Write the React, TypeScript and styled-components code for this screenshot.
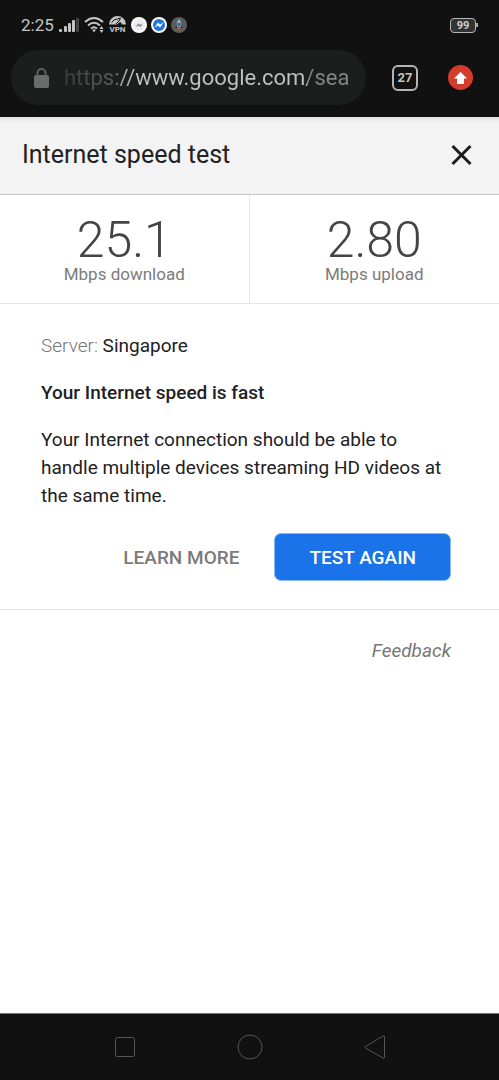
import React from "react";
import styled, { createGlobalStyle } from "styled-components";

const GlobalStyle = createGlobalStyle`
  * { box-sizing: border-box; }
  body {
    margin: 0;
    background: #fff;
    font-family: Roboto, "Liberation Sans", sans-serif;
    color: #212124;
  }
  button, input { font-family: inherit; }
`;

const Screen = styled.div`
  display: flex;
  flex-direction: column;
  min-height: 100vh;
`;

const BrowserChrome = styled.header`
  background: #111;
  padding-bottom: 12px;
`;

const StatusBar = styled.div`
  display: flex;
  align-items: center;
  height: 50px;
  padding: 0 21px;
`;

const Clock = styled.time`
  width: 38px;
  font-size: 17px;
  line-height: 20px;
  color: #c4c4c4;
`;

const StatusIcons = styled.div`
  display: flex;
  flex: 1;
  align-items: center;
  gap: 4px;
  svg { display: block; }
`;

const Battery = styled.div`
  display: flex;
  align-items: center;
`;

const BatteryBody = styled.div`
  width: 26px;
  height: 15px;
  border: 1px solid #b5b5b5;
  border-radius: 4px;
  background: #333;
  color: #d0d0d0;
  font-size: 11px;
  font-weight: 700;
  line-height: 13px;
  text-align: center;
`;

const BatteryTip = styled.div`
  width: 2px;
  height: 4px;
  background: #a5a5a5;
`;

const Toolbar = styled.div`
  display: flex;
  align-items: center;
  padding: 0 26px 0 11px;
`;

const AddressBar = styled.label`
  display: flex;
  flex: 1;
  align-items: center;
  min-width: 0;
  height: 55px;
  padding: 0 12px 0 22px;
  gap: 14px;
  border-radius: 28px;
  background: #1c1d1d;
  svg { flex: none; }
`;

const AddressInput = styled.input`
  flex: 1;
  min-width: 0;
  height: 32px;
  padding: 0;
  border: 0;
  outline: 0;
  font-size: 22px;
  color: transparent;
  background: linear-gradient(
    90deg,
    #3c3c3c 0,
    #5c5c5c 52px,
    #a0a0a0 56px,
    #c2c2c2 72px,
    #c2c2c2 242px,
    #858585 244px
  );
  background-clip: text;
  -webkit-background-clip: text;
`;

const IconButton = styled.button`
  display: flex;
  flex: none;
  align-items: center;
  justify-content: center;
  padding: 0;
  border: 0;
  background: none;
  cursor: pointer;
`;

const TabsButton = styled(IconButton)`
  width: 26px;
  height: 26px;
  margin: 0 30px 0 26px;
  border: 2px solid #b5b5b5;
  border-radius: 6px;
  color: #c4c4c4;
  font-size: 13px;
  font-weight: 700;
`;

const UpdateButton = styled(IconButton)`
  width: 25px;
  height: 25px;
  border-radius: 50%;
  background: #d43c2e;
`;

const TitleBar = styled.div`
  display: flex;
  align-items: center;
  justify-content: space-between;
  height: 78px;
  padding: 0 24px 2px 22px;
  background: linear-gradient(#e4e4e4, #f3f3f3 6px);
  border-bottom: 1px solid #c6c6c6;
`;

const Title = styled.h1`
  margin: 0;
  font-size: 25px;
  font-weight: 400;
  line-height: 32px;
`;

const Results = styled.section`
  display: grid;
  grid-template-columns: 1fr 1fr;
  border-bottom: 1px solid #e6e6e6;
`;

const Result = styled.div`
  display: flex;
  flex-direction: column;
  align-items: center;
  padding: 20px 0;
  &:first-child { border-right: 1px solid #e6e6e6; }
`;

const Speed = styled.div`
  font-size: 50px;
  font-weight: 300;
  line-height: 50px;
  color: #444;
`;

const Unit = styled.div`
  font-size: 17px;
  line-height: 18px;
  color: #7b7b7b;
`;

const Details = styled.section`
  padding: 28px 48px 28px 41px;
  border-bottom: 1px solid #e6e6e6;
  font-size: 19px;
  line-height: 28px;
`;

const Paragraph = styled.p`
  margin: 0 0 19px;
`;

const Muted = styled.span`
  font-weight: 300;
  color: #777;
`;

const Verdict = styled.h2`
  margin: 0 0 19px;
  font-size: 19px;
  font-weight: 500;
  line-height: 28px;
`;

const Actions = styled.div`
  display: flex;
  justify-content: flex-end;
  padding-top: 4px;
`;

const Button = styled.button<{ $primary?: boolean }>`
  height: 48px;
  padding: 0 34px;
  border: 1px solid ${(p) => (p.$primary ? "#8bb8f5" : "transparent")};
  border-radius: 7px;
  background: ${(p) => (p.$primary ? "#1a73e8" : "transparent")};
  color: ${(p) => (p.$primary ? "#fff" : "#7b7b7b")};
  font-size: 19px;
  font-weight: 500;
  white-space: nowrap;
  cursor: pointer;
`;

const Footer = styled.footer`
  display: flex;
  flex: 1;
  align-items: flex-start;
  justify-content: flex-end;
  padding: 27px 48px;
`;

const FeedbackLink = styled.a`
  font-size: 19px;
  font-style: italic;
  line-height: 28px;
  color: #777;
  text-decoration: none;
`;

const SystemNav = styled.nav`
  display: flex;
  justify-content: center;
  gap: 95px;
  height: 67px;
  border-top: 1px solid #777;
  background: #111;
`;

const NavButton = styled(IconButton)`
  width: 30px;
`;

const SignalIcon = () => (
  <svg width="21" height="16" viewBox="0 0 21 16" fill="#c4c4c4" aria-label="Signal">
    <rect x="0" y="12" width="3" height="3" rx="1" />
    <rect x="5" y="9" width="3" height="6" rx="1" />
    <rect x="9" y="6" width="3" height="9" rx="1" />
    <rect x="13" y="3" width="3" height="12" rx="1" />
    <rect x="17" y="1" width="3" height="14" rx="1" fill="#444" />
  </svg>
);

const WifiIcon = () => (
  <svg width="20" height="18" viewBox="0 0 20 18" fill="none" stroke="#c4c4c4" strokeWidth="2" aria-label="Wi-Fi">
    <path d="M1 6 Q10 -2 19 6" />
    <path d="M4 9.500 Q10 4 16 9.500" />
    <path d="M7 12.500 Q10 10 13 12.500" />
    <path d="M8 13.500h4l-2 3z" fill="#c4c4c4" stroke="none" />
    <path d="M17.500 10l2 3h-4zM17.500 17l2-3h-4z" fill="#c4c4c4" stroke="none" />
  </svg>
);

const VpnIcon = () => (
  <svg width="19" height="20" viewBox="0 0 19 20" aria-label="VPN">
    <path d="M1 9.500A8.500 8.500 0 0 1 18 9.500h-4a4 4 0 0 0-2-2.500l-3 2.500z" fill="#c4c4c4" />
    <path d="M3.500 7.500q3-4 6-3.500l3-1-1.500 3-3 3" fill="none" stroke="#111" />
    <text x="9.500" y="17" textAnchor="middle" fontFamily="Roboto, sans-serif" fontSize="8" fontWeight="700" fill="#c4c4c4">VPN</text>
  </svg>
);

const MessengerIcon = ({ blue = false }: { blue?: boolean }) => (
  <svg width="16" height="16" viewBox="0 0 16 16" aria-label="Messenger">
    <circle cx="8" cy="8" r="8" fill="#fff" />
    <circle cx="8" cy="8" r="6" fill={blue ? "#1f75dc" : "#ececec"} />
    <path
      d={blue ? "M3.500 10.500l3.500-5 2 2 3.500-2-3.500 5-2-2z" : "M5 10l2-3.500 2 1.500 2.500-1.500L9.500 10l-2-1.500z"}
      fill={blue ? "#fff" : "#5f7ea8"}
    />
  </svg>
);

const RocketIcon = () => (
  <svg width="16" height="16" viewBox="0 0 16 16" aria-label="Booster">
    <circle cx="8" cy="8" r="8" fill="#5b5d5d" />
    <path d="M8 2c2.500 2 2.500 5 2 8H6C5.500 7 5.500 4 8 2z" fill="#a9adb0" />
    <path d="M6 8l-2 3 2-.5zM10 8l2 3-2-.5z" fill="#222" />
    <circle cx="8" cy="7.500" r="2" fill="#2f6fb8" />
    <path d="M6.500 11h3L8 14z" fill="#d8503a" />
  </svg>
);

const LockIcon = () => (
  <svg width="17" height="22" viewBox="0 0 17 22" aria-hidden="true">
    <rect x="1" y="8" width="15" height="13" rx="2" fill="#6c6c6c" />
    <path d="M4.500 9V6a4 4 0 0 1 8 0v3" fill="none" stroke="#5f5f5f" strokeWidth="2" />
  </svg>
);

export default function App() {
  return (
    <Screen>
      <GlobalStyle />
      <BrowserChrome>
        <StatusBar>
          <Clock>2:25</Clock>
          <StatusIcons>
            <SignalIcon />
            <WifiIcon />
            <VpnIcon />
            <MessengerIcon />
            <MessengerIcon blue />
            <RocketIcon />
          </StatusIcons>
          <Battery>
            <BatteryBody>99</BatteryBody>
            <BatteryTip />
          </Battery>
        </StatusBar>
        <Toolbar>
          <AddressBar>
            <LockIcon />
            <AddressInput aria-label="Address" defaultValue="https://www.google.com/sea" />
          </AddressBar>
          <TabsButton aria-label="27 open tabs">27</TabsButton>
          <UpdateButton aria-label="Update available">
            <svg width="15" height="14" viewBox="0 0 15 14" fill="#fff">
              <path d="M7.500 1L14 7.500h-3V13H4V7.500H1z" />
            </svg>
          </UpdateButton>
        </Toolbar>
      </BrowserChrome>

      <TitleBar>
        <Title>Internet speed test</Title>
        <IconButton aria-label="Close">
          <svg width="28" height="28" viewBox="0 0 28 28" fill="none" stroke="#1c1c1c" strokeWidth="3">
            <path d="M5.500 5l18 18M23.500 5l-18 18" />
          </svg>
        </IconButton>
      </TitleBar>

      <Results>
        <Result>
          <Speed>25.1</Speed>
          <Unit>Mbps download</Unit>
        </Result>
        <Result>
          <Speed>2.80</Speed>
          <Unit>Mbps upload</Unit>
        </Result>
      </Results>

      <Details>
        <Paragraph>
          <Muted>Server:</Muted> Singapore
        </Paragraph>
        <Verdict>Your Internet speed is fast</Verdict>
        <Paragraph>
          Your Internet connection should be able to handle multiple devices streaming HD videos at the same time.
        </Paragraph>
        <Actions>
          <Button>LEARN MORE</Button>
          <Button $primary>TEST AGAIN</Button>
        </Actions>
      </Details>

      <Footer>
        <FeedbackLink href="#feedback">Feedback</FeedbackLink>
      </Footer>

      <SystemNav>
        <NavButton aria-label="Recent apps">
          <svg width="22" height="22" viewBox="0 0 22 22" fill="none" stroke="#555">
            <rect x="1.500" y="1.500" width="19" height="19" rx="2" />
          </svg>
        </NavButton>
        <NavButton aria-label="Home">
          <svg width="26" height="26" viewBox="0 0 26 26" fill="none" stroke="#555">
            <circle cx="13" cy="13" r="12" />
          </svg>
        </NavButton>
        <NavButton aria-label="Back">
          <svg width="22" height="24" viewBox="0 0 22 24" fill="none" stroke="#555" strokeLinejoin="round">
            <path d="M1.500 11.500q-1 .5 0 1.500L19 23q1.500.5 1.500-1V2q0-1.500-1.500-1z" />
          </svg>
        </NavButton>
      </SystemNav>
    </Screen>
  );
}
